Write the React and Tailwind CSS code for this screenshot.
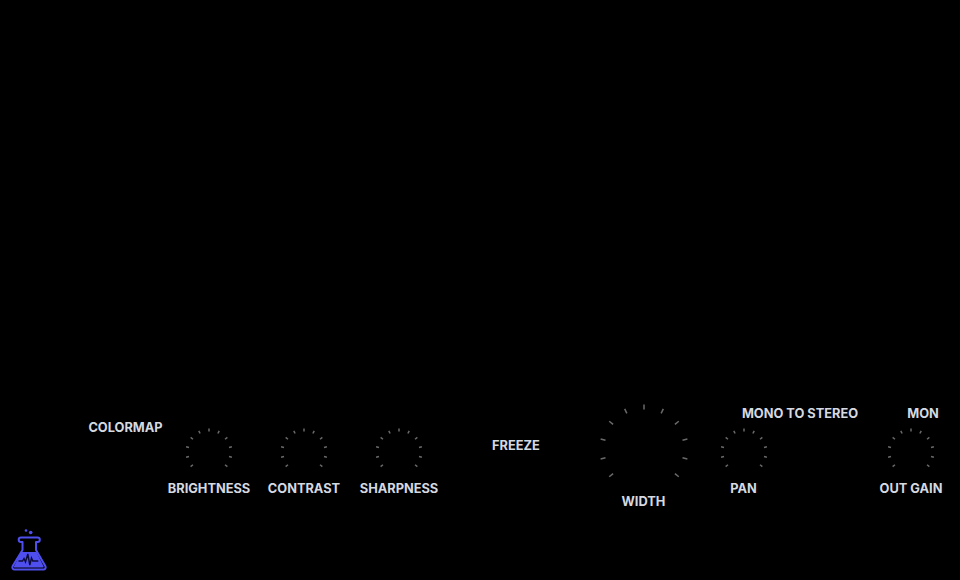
const FONT = "font-['Inter','Liberation_Sans',sans-serif]";

// 14 divisions round the dial, the bottom three are left out
const STEP = 360 / 14;
const TICKS = [-5, -4, -3, -2, -1, 0, 1, 2, 3, 4, 5];

function Knob({ size, radius, tick }) {
  const c = size / 2;
  return (
    <svg width={size} height={size} viewBox={`0 0 ${size} ${size}`} className="block">
      {TICKS.map((t) => (
        <line
          key={t}
          x1={c}
          y1={c - radius}
          x2={c}
          y2={c - radius + tick}
          stroke="#6a6a6a"
          strokeWidth="1.5"
          transform={`rotate(${t * STEP} ${c} ${c})`}
        />
      ))}
    </svg>
  );
}

function Label({ children, className = "" }) {
  return (
    <div className={`text-[12.8px] leading-[18px] font-bold text-[#d5d9e0] whitespace-nowrap text-center ${className}`}>
      {children}
    </div>
  );
}

function SmallKnob({ label, className = "" }) {
  return (
    <div className={`flex flex-col items-center w-[95px] mt-[22px] ${className}`}>
      <Knob size={52} radius={23.5} tick={3} />
      <Label className="mt-[2px]">{label}</Label>
    </div>
  );
}

function Logo() {
  return (
    <svg width="40" height="46" viewBox="0 0 40 46" className="block">
      <circle cx="17" cy="2.500" r="1.300" fill="#4f4ff0" />
      <circle cx="21.700" cy="4.500" r="1.800" fill="#4f4ff0" />
      <path
        d="M12 9.500h16.500a2.300 2.300 0 0 1 0 4.600h-1.500v7.900l9.300 16c1 1.700-.1 3.500-2 3.500H5.700c-1.900 0-3-1.800-2-3.500l9.800-16v-7.900H12a2.300 2.300 0 0 1 0-4.600z"
        fill="none"
        stroke="#4f4ff0"
        strokeWidth="2"
        strokeLinejoin="round"
      />
      <path d="M12.500 24h15l7 14.200c.4.800-.1 1.300-.8 1.300H5.800c-.7 0-1.200-.5-.8-1.300z" fill="#4f4ff0" />
      <path
        d="M9.500 33h4l1.500-2.500 1.500 3.500 2.300-8 2 11 1.700-7 1.300 3h5.500"
        fill="none"
        stroke="#0b0b3a"
        strokeWidth="1.400"
      />
    </svg>
  );
}

export default function App() {
  return (
    <div className={`h-[580px] w-[960px] bg-black flex flex-col justify-end overflow-hidden ${FONT}`}>
      <div className="flex items-start h-[124px]">
        <Label className="w-[77px] ml-[87px] mt-[15px]">COLORMAP</Label>
        <SmallKnob label="BRIGHTNESS" className="ml-[-2.5px]" />
        <SmallKnob label="CONTRAST" />
        <SmallKnob label="SHARPNESS" />
        <Label className="w-[46px] ml-[45.5px] mt-[33px]">FREEZE</Label>
        <div className="flex flex-col items-center w-[100px] ml-[55.5px] mt-[-3.5px]">
          <Knob size={96} radius={44.5} tick={5} />
          <Label className="mt-[-3.5px]">WIDTH</Label>
        </div>
        <SmallKnob label="PAN" className="ml-[2.5px]" />
        <Label className="w-[118px] ml-[-50px] mt-[1px]">MONO TO STEREO</Label>
        <div className="flex flex-col items-center w-[95px] ml-[4.5px] mt-[1px]">
          <Label className="ml-[24px]">MON</Label>
          <div className="mt-[3px]">
            <Knob size={52} radius={23.5} tick={3} />
          </div>
          <Label className="mt-[2px]">OUT GAIN</Label>
        </div>
      </div>
      <div className="pl-[9px] pb-[6px] h-[52px] flex items-end">
        <Logo />
      </div>
    </div>
  );
}
